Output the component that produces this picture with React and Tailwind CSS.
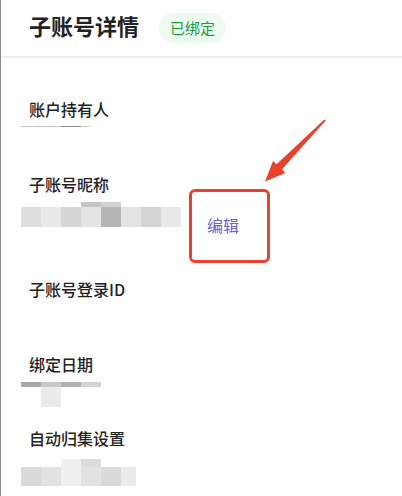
import React from "react";

const font = { fontFamily: '"Noto Sans CJK SC", "Noto Sans", sans-serif' };

function Label({ children }) {
  return (
    <div className="text-[16px] leading-[16px] font-medium text-[#222222] whitespace-nowrap">
      {children}
    </div>
  );
}

export default function App() {
  return (
    <div className="relative w-[402px] h-[496px] overflow-hidden bg-white" style={font}>
      <div className="h-full border-l border-[#8c8c8c] flex flex-col">
        {/* header */}
        <div className="flex items-start h-[56px] pl-[28px]">
          <h1 className="mt-[14px] text-[22px] leading-[22px] font-bold text-[#222222] whitespace-nowrap">
            子账号详情
          </h1>
          <span className="ml-[20px] mt-[13px] h-[30px] px-[11px] rounded-full bg-[#eefbef] text-[#1f9a3a] text-[15px] leading-[30px] whitespace-nowrap">
            已绑定
          </span>
        </div>
        <div className="h-[2px] bg-[#ececec]" />

        {/* content */}
        <div className="pl-[28px] pt-[43px] flex flex-col">
          {/* 账户持有人 */}
          <div className="h-[75px] flex flex-col">
            <Label>账户持有人</Label>
            <div className="mt-[9px] ml-[-8px] flex h-px">
              <div className="w-[40px] bg-[#c4c4c4]" />
              <div className="w-[20px] bg-[#8e8e8e]" />
              <div className="w-[9px] bg-[#c8c8c8]" />
            </div>
          </div>

          {/* 子账号昵称 */}
          <div className="h-[104.5px] flex flex-col">
            <Label>子账号昵称</Label>
            <div className="mt-[10px] flex items-start">
              <div className="ml-[-8px] flex items-end h-[25px]">
                <div className="w-[20px] h-[20px] bg-[#dedede]" />
                <div className="w-[20px] h-[20px] bg-[#e9e9e9]" />
                <div className="w-[20px] h-[20px] bg-[#d6d6d6]" />
                <div className="w-[20px] h-[25px] flex flex-col">
                  <div className="h-[5px] bg-[#c6c6c6]" />
                  <div className="flex-1 bg-[#e4e4e4]" />
                </div>
                <div className="w-[20px] h-[25px] flex flex-col">
                  <div className="h-[5px] bg-[#d2d2d2]" />
                  <div className="flex-1 bg-[#b5b5b5]" />
                </div>
                <div className="w-[20px] h-[20px] bg-[#e3e3e3]" />
                <div className="w-[20px] h-[20px] bg-[#d4d4d4]" />
                <div className="w-[20px] h-[20px] bg-[#e8e8e8]" />
              </div>
              <span className="ml-[26px] mt-[15px] text-[16px] leading-[16px] text-[#6464cc] whitespace-nowrap">
                编辑
              </span>
            </div>
          </div>

          {/* 子账号登录ID */}
          <div className="h-[75px] flex flex-col">
            <Label>子账号登录ID</Label>
          </div>

          {/* 绑定日期 */}
          <div className="h-[74px] flex flex-col">
            <Label>绑定日期</Label>
            <div className="mt-[10.5px] ml-[-8px] flex flex-col">
              <div className="flex h-[5px]">
                <div className="w-[20px] bg-[#a8a8a8]" />
                <div className="w-[20px] bg-[#c8c8c8]" />
                <div className="w-[20px] bg-[#b2b2b2]" />
                <div className="w-[20px] bg-[#d3d3d3]" />
              </div>
              <div className="ml-[20px] w-[20px] h-[20px] bg-[#ebebeb]" />
            </div>
          </div>

          {/* 自动归集设置 */}
          <div className="flex flex-col">
            <Label>自动归集设置</Label>
            <div className="mt-[13.5px] ml-[-8px] flex items-end h-[27px]">
              <div className="w-[20px] h-[19px] bg-[#dadada]" />
              <div className="w-[20px] h-[19px] bg-[#e2e2e2]" />
              <div className="w-[20px] h-[27px] bg-[#f0f0f0]" />
              <div className="w-[20px] h-[27px] flex flex-col">
                <div className="h-[8px] bg-[#dcdcdc]" />
                <div className="flex-1 bg-[#e2e2e2]" />
              </div>
              <div className="w-[20px] h-[19px] bg-[#dadada]" />
              <div className="w-[15px] h-[19px] bg-[#ebebeb]" />
            </div>
          </div>
        </div>
      </div>

      {/* annotation overlays */}
      <div className="absolute left-[189px] top-[189px] w-[81px] h-[74px] border-[3px] border-[#e8422c] rounded-[6px] pointer-events-none" />
      <svg
        className="absolute left-0 top-0 pointer-events-none"
        width="402"
        height="496"
        viewBox="0 0 402 496"
      >
        <polygon
          points="324.3,119.6 325.8,120.6 282,169.3 285.2,173 265,181.5 273,161 276.6,164.3"
          fill="#e8422c"
        />
      </svg>
    </div>
  );
}
